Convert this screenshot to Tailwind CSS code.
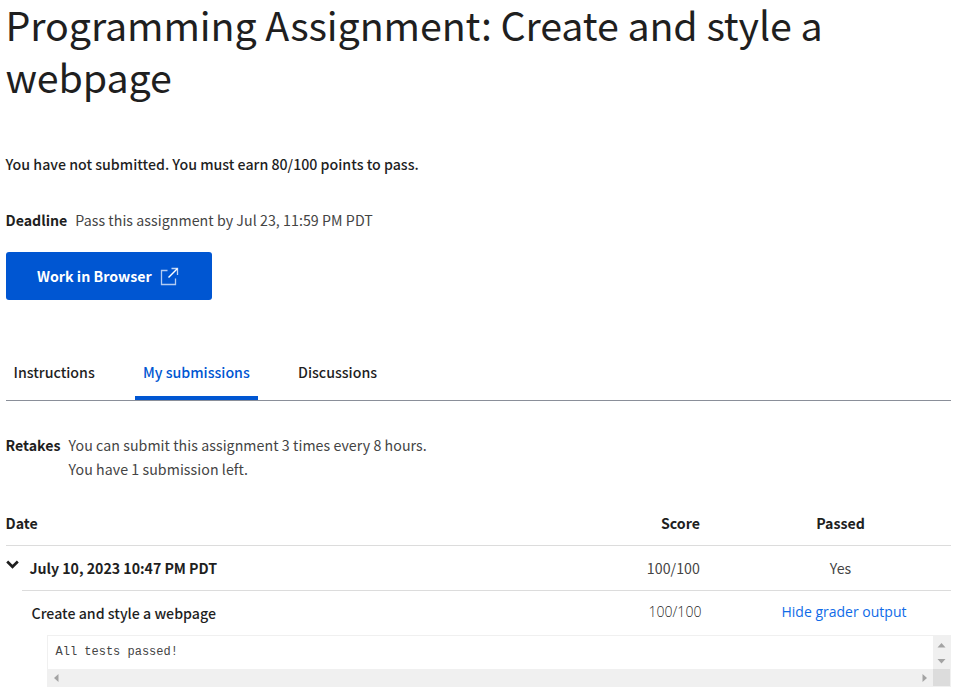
<!DOCTYPE html>
<html lang="en">
<head>
<meta charset="utf-8">
<title>Programming Assignment</title>
<script src="https://cdn.jsdelivr.net/npm/@tailwindcss/browser@4"></script>
</head>
<body class="bg-white h-[695px] overflow-hidden font-['Source_Sans_Pro','Noto_Sans_CJK_SC',sans-serif] text-[14.2px] leading-6 text-[#1f1f1f] whitespace-nowrap">
<main class="flow-root ml-[6px] w-[945px]">
  <h1 class="-mt-[2px] -ml-[0.5px] text-[39.4px] leading-[52px] tracking-[-0.11px]"><span>Programming Assignment: Create and style a</span><br><span>webpage</span></h1>
  <p class="mt-[50px] -ml-[0.5px] font-medium"><span>You have not submitted. You must earn 80/100 points to pass.</span></p>
  <p class="mt-8 -ml-[0.5px] flex gap-2"><b class="font-bold">Deadline</b><span class="font-normal tracking-[0.055px] text-[#444]">Pass this assignment by Jul 23, 11:59 PM PDT</span></p>
  <button class="mt-5 flex h-12 w-[206px] items-center rounded-[3px] bg-[#0056d2] pl-[31px] font-bold text-white">
    <span>Work in Browser</span>
    <svg class="ml-[8.500px]" width="19" height="19" viewBox="0 0 19 19" fill="none" stroke="#fff"><path d="M7.500 3.500H1.500v14h14V11.500" stroke-opacity=".7" stroke-width="1.300"/><path d="M11.500 1.500h6V8" stroke-opacity=".75" stroke-width="1.300"/><path d="M17.500 1.500 8.500 10.500" stroke-width="1.400"/></svg>
  </button>
  <nav class="mt-[52px] flex h-[49px] border-b border-[#8a8f99] font-medium">
    <a class="h-12 w-[129px] pl-[7.500px] pt-2"><span>Instructions</span></a>
    <a class="h-12 w-[123px] rounded-t-[2px] border-b-4 border-[#0056d2] pl-2 pt-2 text-[#0056d2]"><span>My submissions</span></a>
    <a class="h-12 pl-10 pt-2"><span>Discussions</span></a>
  </nav>
  <section class="mt-[32px] -ml-[0.5px] flex gap-2"><b class="font-bold">Retakes</b><p class="font-normal tracking-[0.06px] text-[#444]"><span>You can submit this assignment 3 times every 8 hours.</span><br><span>You have 1 submission left.</span></p></section>
  <section class="mt-[19px]">
    <div class="grid h-[46px] grid-cols-[1fr_194px_221px] items-center border-b border-[#dcdcdc] pt-px font-bold">
      <span class="-ml-[0.5px]">Date</span><span class="pr-[30px] text-right">Score</span><span class="text-center">Passed</span>
    </div>
    <div class="flex">
      <svg class="mt-[14px] mr-[3px] shrink-0" width="13" height="10" viewBox="0 0 13 10" fill="none" stroke="#1f1f1f" stroke-width="2.700"><path d="M1.200 1.500 6.500 6.800 11.800 1.500"/></svg>
      <div class="w-[929px]">
        <div class="grid h-[45px] grid-cols-[1fr_194px_221px] items-center border-b border-[#dcdcdc] pl-[7.500px]">
          <span class="font-bold tracking-[-0.03px]">July 10, 2023 10:47 PM PDT</span><span class="pr-[30px] text-right font-normal tracking-[0.06px] text-[#444]">100/100</span><span class="text-center font-normal text-[#444]">Yes</span>
        </div>
        <div class="grid h-[44px] grid-cols-[1fr_194px_221px] pl-[9.500px] pt-[11px]">
          <span class="-mt-px font-medium">Create and style a webpage</span><span class="-mt-[2px] pr-[28.500px] text-right font-['Open_Sans',sans-serif] text-[14px] font-light tracking-[0.05px]">100/100</span><span class="-mt-[2px] pl-[7px] text-center font-['Open_Sans',sans-serif] text-[14px] text-[#0f6be8]">Hide grader output</span>
        </div>
        <div class="ml-[25px] grid h-[52px] w-[904px] grid-cols-[1fr_17px] grid-rows-[33px_18px] border border-b-0 border-[#f0f0f0]">
          <div class="pl-[7.500px] pt-1 font-['Liberation_Mono',monospace] text-[12px] text-[#444]"><span>All tests passed!</span></div>
          <svg width="17" height="33" viewBox="0 0 17 33"><rect width="17" height="33" fill="#f0f0f0"/><path d="M4.500 11.500h8L8.500 7zM4.500 23h8l-4 4.500z" fill="#a3a3a3"/></svg>
          <div class="flex items-center justify-between bg-[#f0f0f0] pb-px pl-[6px] pr-[6px]">
            <svg width="5" height="8" viewBox="0 0 5 8"><path d="M4.500 0v8L0 4z" fill="#a3a3a3"/></svg>
            <svg width="5" height="8" viewBox="0 0 5 8"><path d="M.5 0v8L5 4z" fill="#a3a3a3"/></svg>
          </div>
          <div class="border-b border-[#f0f0f0] bg-[#dcdcdc]"></div>
        </div>
      </div>
    </div>
  </section>
</main>
</body>
</html>
